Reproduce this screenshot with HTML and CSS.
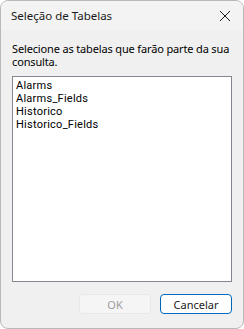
FILE: index.html
```html
<!DOCTYPE html>
<html lang="pt-BR">
  <head>
    <meta charset="UTF-8" />
    <title>Seleção de Tabelas</title>
    <link rel="stylesheet" href="styles.css">
  </head>
  <body>
    <div class="window">
      <div class="titlebar">
        <span class="title">Seleção de Tabelas</span>
        <svg class="close" width="12" height="12" viewBox="0 0 12 12">
          <path d="M1 1 L11 11 M11 1 L1 11" stroke="#1a1a1a" stroke-width="1" fill="none" />
        </svg>
      </div>
      <div class="content">
        <p class="label">Selecione as tabelas que farão parte da sua consulta.</p>
        <ul class="listbox">
          <li>Alarms</li>
          <li>Alarms_Fields</li>
          <li>Historico</li>
          <li>Historico_Fields</li>
        </ul>
        <div class="buttons">
          <button class="btn" disabled>OK</button>
          <button class="btn default">Cancelar</button>
        </div>
      </div>
    </div>
  </body>
</html>
```

FILE: styles.css
```css
* {
  margin: 0;
  padding: 0;
  box-sizing: border-box;
}

body {
  font-family: "Noto Sans", "Open Sans", sans-serif;
  font-size: 11px;
  color: #000;
  background: #fff;
  width: 244px;
  height: 329px;
}

.window {
  width: 244px;
  height: 329px;
  border: 1px solid #b9b9b9;
  border-radius: 8px;
  background-color: #f0f0f0;
  overflow: hidden;
  display: flex;
  flex-direction: column;
}

.titlebar {
  height: 29px;
  background-color: #f3f3f3;
  display: flex;
  align-items: center;
  justify-content: space-between;
  padding: 0 12px 0 10px;
}

.title {
  font-size: 11.5px;
  color: #1a1a1a;
}

.close {
  display: block;
}

.content {
  flex: 1;
  display: flex;
  flex-direction: column;
  padding: 0 10px 0 11px;
}

.label {
  margin-top: 12px;
  line-height: 13px;
  letter-spacing: -0.15px;
  color: #000;
}

.listbox {
  list-style: none;
  margin-top: 8px;
  margin-right: 1px;
  height: 206px;
  background-color: #fff;
  border: 1px solid #828790;
  padding: 2px 3px;
}

.listbox li {
  font-family: Roboto, "Noto Sans", sans-serif;
  font-size: 11px;
  letter-spacing: 0.25px;
  line-height: 13px;
  white-space: nowrap;
}

.buttons {
  display: flex;
  justify-content: flex-end;
  gap: 9px;
  margin-top: 12px;
  margin-right: 1px;
}

.btn {
  width: 72px;
  height: 20px;
  font-family: inherit;
  font-size: 11px;
  border-radius: 4px;
  border: 1px solid #d0d0d0;
  background-color: #fdfdfd;
  color: #1a1a1a;
}

.btn:disabled {
  background-color: #f5f5f5;
  border-color: #e8e8e8;
  color: #9d9d9d;
}

.btn.default {
  border-color: #0067c0;
  background-color: #fff;
}
```
